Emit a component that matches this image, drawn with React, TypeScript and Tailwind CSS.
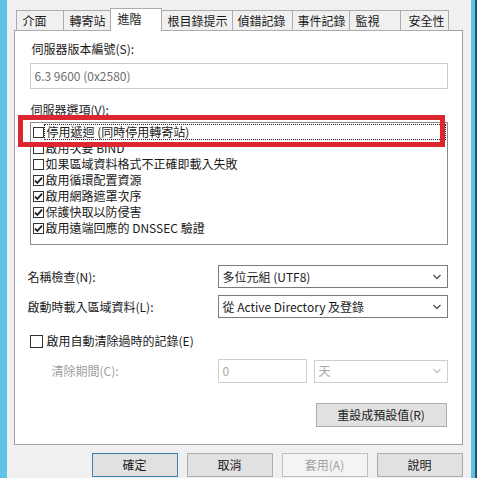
import { ReactNode } from "react";

const font = {
  fontFamily: '"Noto Sans CJK TC", "Noto Sans", sans-serif',
};

const tabs = [
  { label: "介面", w: "w-[47px]", pl: "pl-[6px]" },
  { label: "轉寄站", w: "w-[47px]", pl: "pl-[6px]" },
  { label: "進階", w: "w-[52px]", pl: "pl-[7px]", active: true },
  { label: "根目錄提示", w: "w-[70px]", pl: "pl-[6px]" },
  { label: "偵錯記錄", w: "w-[60px]", pl: "pl-[5px]" },
  { label: "事件記錄", w: "w-[57px]", pl: "pl-[5px]" },
  { label: "監視", w: "w-[51px]", pl: "pl-[6px]" },
  { label: "安全性", w: "w-[49px]", pl: "pl-[8px]" },
];

const options = [
  { label: "停用遞迴 (同時停用轉寄站)", checked: false, focus: true },
  { label: "啟用次要 BIND", checked: false },
  { label: "如果區域資料格式不正確即載入失敗", checked: false },
  { label: "啟用循環配置資源", checked: true },
  { label: "啟用網路遮罩次序", checked: true },
  { label: "保護快取以防侵害", checked: true },
  { label: "啟用遠端回應的 DNSSEC 驗證", checked: true },
];

function Check({ checked, size = "w-[11px] h-[11px]" }: { checked: boolean; size?: string }) {
  return (
    <span className={`${size} shrink-0 border border-[#333333] bg-white flex items-center justify-center`}>
      {checked && (
        <svg width="9" height="9" viewBox="0 0 9 9">
          <path d="M1 4.6 L3.4 7 L8 1.6" fill="none" stroke="#1a1a1a" strokeWidth="1.8" />
        </svg>
      )}
    </span>
  );
}

function Chevron({ color = "#444" }: { color?: string }) {
  return (
    <svg width="8" height="6" viewBox="0 0 8 6">
      <path d="M0.5 1 L4 4.5 L7.5 1" fill="none" stroke={color} strokeWidth="1.4" />
    </svg>
  );
}

function Select({ children, disabled, w }: { children: ReactNode; disabled?: boolean; w: string }) {
  return (
    <div
      className={`${w} h-[23px] flex items-center justify-between pl-[4px] pr-[6px] bg-white border ${
        disabled ? "border-[#cfcfcf] text-[#a8a8a8]" : "border-[#7a7a7a] text-[#1a1a1a]"
      }`}
    >
      <span>{children}</span>
      <Chevron color={disabled ? "#c4c4c4" : "#555"} />
    </div>
  );
}

function Button({
  children,
  w = "w-[86px]",
  variant,
}: {
  children: ReactNode;
  w?: string;
  variant?: "default" | "disabled";
}) {
  const style =
    variant === "default"
      ? "bg-[#e1e1e1] border-[#3c7fb1] text-[#1a1a1a]"
      : variant === "disabled"
      ? "bg-[#f4f4f4] border-[#bfbfbf] text-[#a0a0a0]"
      : "bg-[#e1e1e1] border-[#adadad] text-[#1a1a1a]";
  return (
    <div className={`${w} h-[24px] border flex items-center justify-center ${style}`}>
      {children}
    </div>
  );
}

export default function App() {
  return (
    <div className="w-[489px] h-[494px] bg-white relative text-[12px] leading-[16px]" style={font}>
      <div className="flex h-[478px] w-[477px]">
        <div className="w-[7px] bg-[#5fc3e6]" />
        <div className="flex-1 bg-[#f0f0f0] flex flex-col pl-[7px] pr-[8px]">
          {/* tabs */}
          <div className="flex items-end h-[23px] mt-[8px] pl-[2px] relative z-10">
            {tabs.map((t, i) => (
              <div
                key={t.label}
                className={`${t.w} ${t.pl} flex items-center border-t border-l border-[#acacac] ${
                  i === tabs.length - 1 ? "border-r" : ""
                } ${
                  t.active
                    ? "h-[23px] bg-white border-r pb-[2px]"
                    : "h-[21px] bg-[#f0f0f0] border-b"
                } ${i === 3 ? "border-l-0" : ""} text-[#1a1a1a]`}
              >
                {t.label}
              </div>
            ))}
          </div>

          {/* panel */}
          <div className="-mt-px h-[415px] bg-white border border-[#a0a0a0] flex flex-col pl-[15px] pr-[14px]">
            <div className="mt-[10px] pl-[2px] text-[#1a1a1a]">伺服器版本編號(S):</div>
            <div className="mt-[6px] h-[26px] border border-[#cccccc] bg-white flex items-center pl-[4px] text-[#6d6d6d]">
              6.3 9600 (0x2580)
            </div>

            <div className="mt-[13px] pl-[1px] text-[#1a1a1a]">伺服器選項(V):</div>
            <div className="mt-[4px] h-[123px] border border-[#8c8c8c] bg-white flex flex-col pl-[2px] pr-[1px] pt-px">
              {options.map((o) => (
                <div key={o.label} className="h-[16px] flex items-center text-[#1a1a1a]">
                  <Check checked={o.checked} />
                  <span
                    className={`flex-1 h-full flex items-center pl-[2px] ${
                      o.focus ? "border border-dotted border-[#222]" : ""
                    }`}
                  >
                    {o.label}
                  </span>
                </div>
              ))}
            </div>

            <div className="mt-[20px] flex items-center justify-between text-[#1a1a1a]">
              <span className="pl-[-2px] -ml-[2px]">名稱檢查(N):</span>
              <Select w="w-[230px]">多位元組 (UTF8)</Select>
            </div>
            <div className="mt-[7px] flex items-center justify-between text-[#1a1a1a]">
              <span className="-ml-[2px]">啟動時載入區域資料(L):</span>
              <Select w="w-[230px]">從 Active Directory 及登錄</Select>
            </div>

            <div className="mt-[15px] h-[16px] flex items-center gap-[4px] text-[#1a1a1a]">
              <Check checked={false} size="w-[13px] h-[13px]" />
              <span>啟用自動清除過時的記錄(E)</span>
            </div>

            <div className="mt-[10px] flex items-center">
              <span className="w-[188px] pl-[22px] text-[#a0a0a0]">清除期間(C):</span>
              <div className="w-[89px] h-[24px] border border-[#cfcfcf] bg-white flex items-center pl-[4px] text-[#a8a8a8]">
                0
              </div>
              <div className="ml-[7px]">
                <Select w="w-[134px]" disabled>
                  天
                </Select>
              </div>
            </div>

            <div className="mt-[20px] flex justify-end pr-[1px]">
              <Button w="w-[131px]">重設成預設值(R)</Button>
            </div>
          </div>

          {/* bottom buttons */}
          <div className="mt-[8px] flex justify-end gap-[9px]">
            <Button variant="default">確定</Button>
            <Button>取消</Button>
            <Button variant="disabled">套用(A)</Button>
            <Button>說明</Button>
          </div>
        </div>
        <div className="w-[5px] bg-[#5fc3e6]" />
        <div className="w-[2px] bg-[#25536a]" />
      </div>

      {/* red highlight annotation */}
      <div className="absolute left-[18px] top-[115px] w-[427px] h-[32px] border-[5px] border-[#dc2630]" />
    </div>
  );
}
